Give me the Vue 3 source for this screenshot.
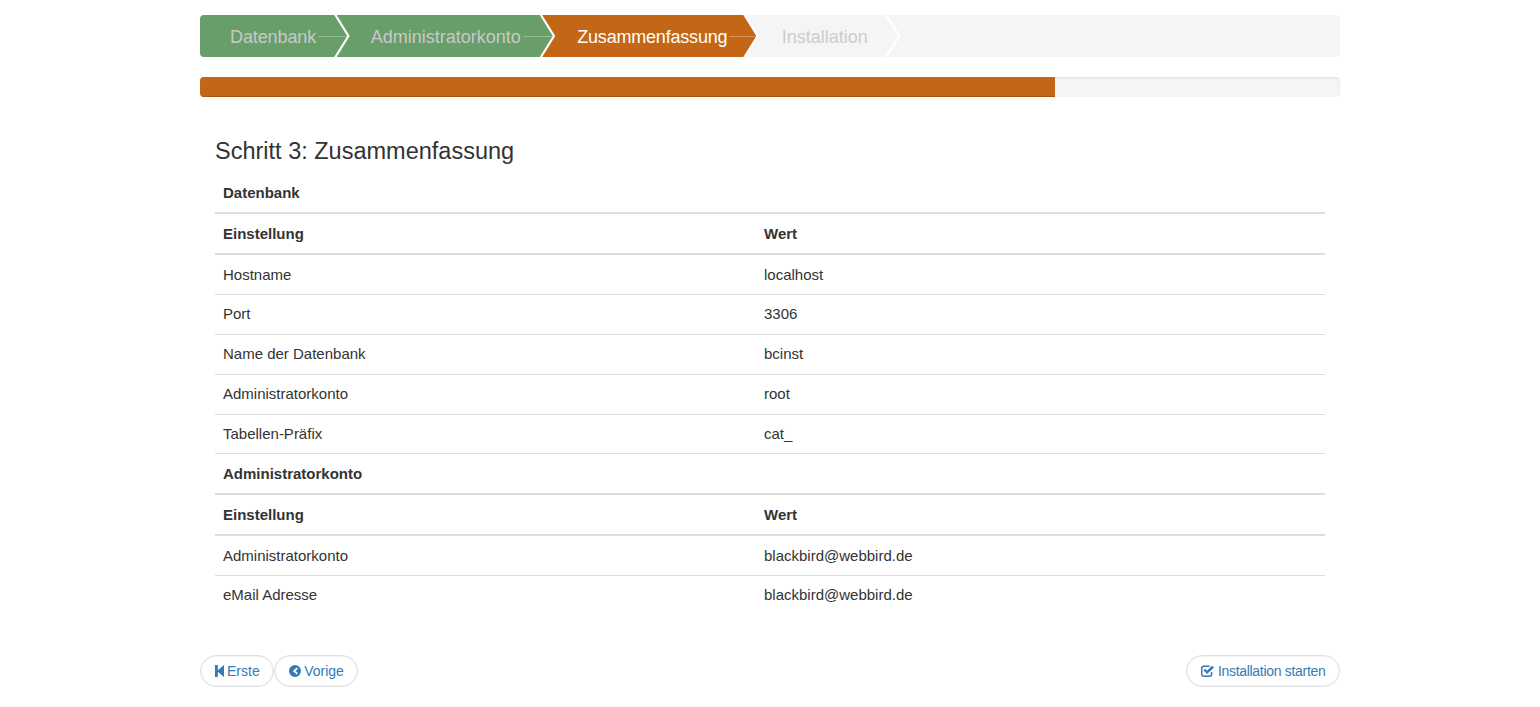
<script setup>
const steps = [
  { label: 'Datenbank', state: 'done first' },
  { label: 'Administratorkonto', state: 'done' },
  { label: 'Zusammenfassung', state: 'active' },
  { label: 'Installation', state: 'todo' }
]
const sections = [
  {
    title: 'Datenbank',
    rows: [
      ['Hostname', 'localhost'],
      ['Port', '3306'],
      ['Name der Datenbank', 'bcinst'],
      ['Administratorkonto', 'root'],
      ['Tabellen-Präfix', 'cat_']
    ]
  },
  {
    title: 'Administratorkonto',
    rows: [
      ['Administratorkonto', 'blackbird@webbird.de'],
      ['eMail Adresse', 'blackbird@webbird.de']
    ]
  }
]
</script>

<template>
  <div class="page">
    <nav class="steps">
      <div v-for="s in steps" :key="s.label" class="step" :class="s.state">
        <span class="label">{{ s.label }}</span>
      </div>
      <div class="step filler"></div>
    </nav>
    <div class="progress"><div class="bar"></div></div>
    <main class="content">
      <h3>Schritt 3: Zusammenfassung</h3>
      <section v-for="sec in sections" :key="sec.title">
        <div class="row title"><div class="cell">{{ sec.title }}</div></div>
        <div class="row head"><div class="cell">Einstellung</div><div class="cell">Wert</div></div>
        <div v-for="r in sec.rows" :key="r[0]" class="row">
          <div class="cell">{{ r[0] }}</div><div class="cell">{{ r[1] }}</div>
        </div>
      </section>
    </main>
    <footer class="actions">
      <div class="group">
        <a class="btn">
          <svg width="9" height="12" viewBox="0 0 9 12"><path fill="currentColor" d="M0 0h2.800v5.200L9 0v12L2.800 6.800V12H0z"/></svg>
          <span>Erste</span>
        </a>
        <a class="btn">
          <svg width="12" height="12" viewBox="0 0 12 12"><path fill="currentColor" fill-rule="evenodd" d="M6 0a6 6 0 1 1 0 12A6 6 0 0 1 6 0zm1.600 2.400L3.900 6l3.700 3.600 1.300-1.300L6.600 6l2.300-2.300z"/></svg>
          <span>Vorige</span>
        </a>
      </div>
      <a class="btn install">
        <svg width="13" height="12" viewBox="0 0 13 12"><path fill="none" stroke="currentColor" stroke-width="1.500" d="M10.600 7v2.300a1.900 1.900 0 0 1-1.900 1.900H2.600A1.900 1.900 0 0 1 .7 9.300V3.200a1.900 1.900 0 0 1 1.900-1.900h6"/><path fill="currentColor" d="M2.500 5.300 4 3.800 6 5.800 11 .7l2 1.700L6 9z"/></svg>
        <span>Installation starten</span>
      </a>
    </footer>
  </div>
</template>

<style scoped>
.page {
  width: 1140px;
  margin: 0 auto;
  padding-top: 15px;
  font-family: "Liberation Sans", Arial, sans-serif;
  font-size: 15px;
  line-height: 20px;
  color: #333;
}
.steps {
  display: flex;
  height: 42px;
  border-radius: 4px;
  overflow: hidden;
}
.step {
  display: flex;
  align-items: center;
  flex: none;
  overflow: hidden;
  margin-right: -10.5px;
  padding: 0 32px 0 34px;
  font-size: 18px;
  clip-path: polygon(0 0, calc(100% - 13px) 0, 100% 50%, calc(100% - 13px) 100%, 0 100%, 13px 50%);
}
.step.first {
  padding: 0 31px 0 30px;
  letter-spacing: -0.1px;
  clip-path: polygon(0 0, calc(100% - 13px) 0, 100% 50%, calc(100% - 13px) 100%, 0 100%);
}
.done { background: #689e69; color: #c9c9c9; }
.active { background: #c36615; color: #fff; letter-spacing: -0.2px; padding: 0 29px 0 35px; }
.todo { background: #f5f5f5; color: #ccc; padding: 0 30px 0 36px; }
.filler {
  flex: 1;
  margin-right: 0;
  background: #f5f5f5;
  clip-path: polygon(0 0, 100% 0, 100% 100%, 0 100%, 13px 50%);
}
.label { position: relative; top: 1px; }
.label::after {
  content: "";
  position: absolute;
  left: 100%;
  top: 9px;
  width: 40px;
  height: 1px;
  margin-left: 2px;
  background: rgba(255, 255, 255, 0.3);
}
.progress {
  height: 20px;
  margin-top: 20px;
  background: #f5f5f5;
  border-radius: 4px;
  overflow: hidden;
  box-shadow: inset 0 1px 2px rgba(0, 0, 0, 0.1);
}
.bar {
  width: 75%;
  height: 100%;
  background: #c36615;
  box-shadow: inset 0 -1px 0 rgba(0, 0, 0, 0.15);
}
.content { padding: 0 15px; }
h3 {
  margin: 41px 0 0;
  height: 35px;
  font-size: 23.5px;
  font-weight: 400;
  line-height: 26px;
}
.row {
  display: grid;
  grid-template-columns: 541px 1fr;
  height: 40px;
  box-sizing: border-box;
  border-bottom: 1px solid #ddd;
}
.cell { padding: 9px 8px 0; }
.head + .row .cell { padding-top: 10px; }
.title, .head {
  height: 41px;
  border-bottom: 2px solid #ddd;
  font-weight: 700;
}
.title .cell, .head .cell { padding-top: 10px; }
section:first-of-type .row:last-child { height: 39px; }
section:last-of-type .row:last-child { border-bottom: 0; }
.actions {
  display: flex;
  justify-content: space-between;
  margin-top: 39px;
  font-size: 14px;
}
.group { display: flex; }
.btn {
  display: inline-flex;
  align-items: center;
  gap: 3px;
  height: 32px;
  padding: 0 13.5px 0 14px;
  box-sizing: border-box;
  border: 1px solid #e0e0e0;
  border-radius: 16px;
  box-shadow: inset 0 0 0 1px #f3f3f3;
  color: #337ab7;
  background: #fff;
}
.install { gap: 4px; letter-spacing: -0.3px; }
</style>
